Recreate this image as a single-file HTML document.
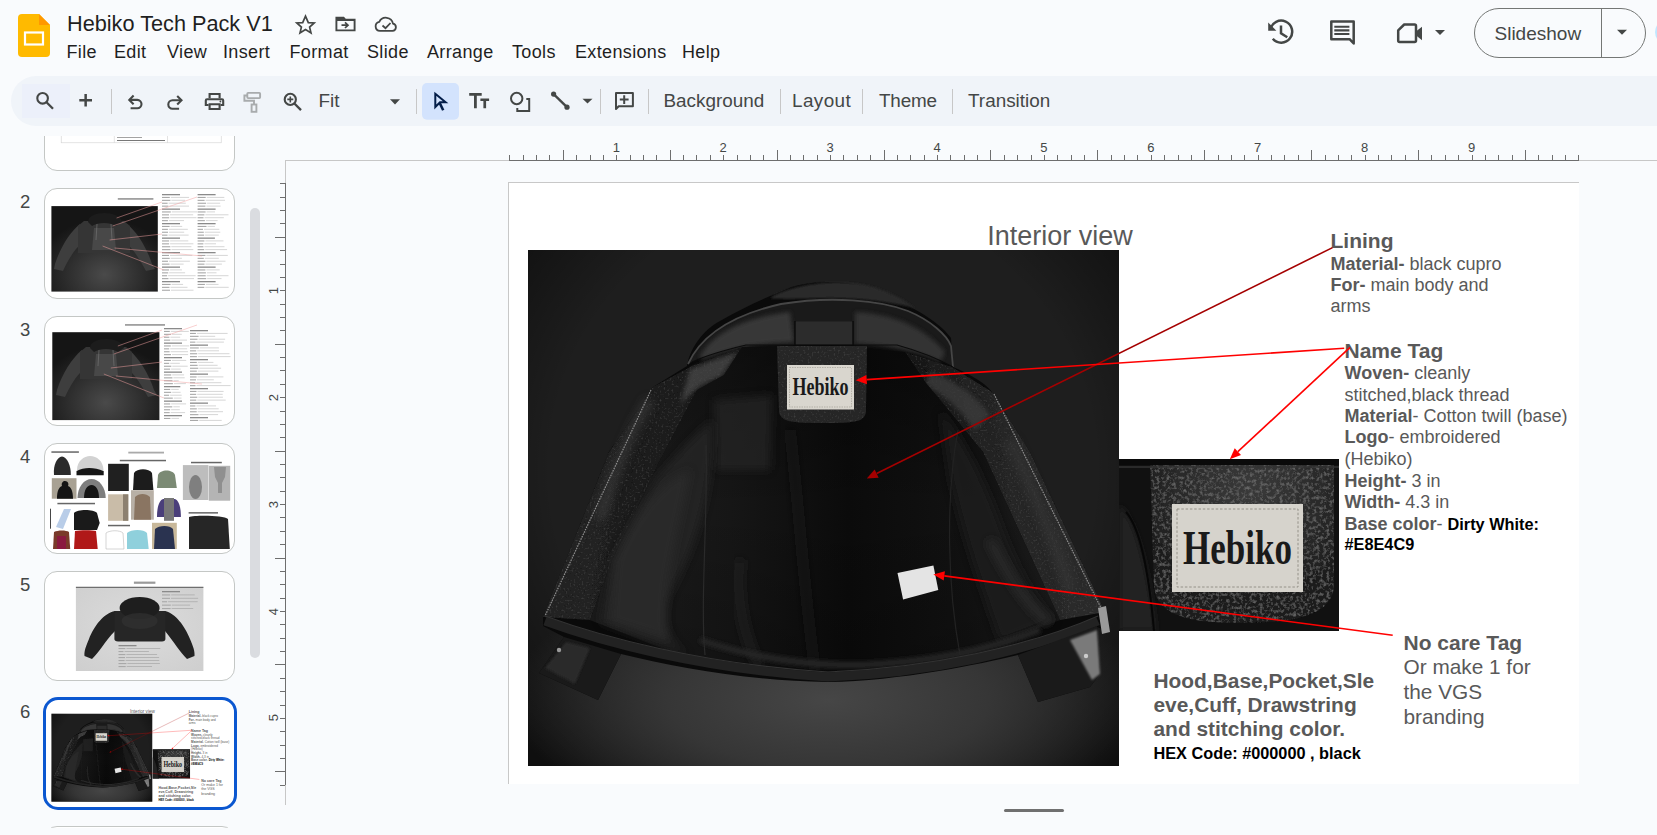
<!DOCTYPE html>
<html><head><meta charset="utf-8">
<style>
*{margin:0;padding:0;box-sizing:border-box}
html,body{width:1657px;height:835px;overflow:hidden;background:#F9FBFD;font-family:"Liberation Sans",sans-serif}
.a{position:absolute}
.t{position:absolute;white-space:nowrap;line-height:1}
.ic{position:absolute;fill:#444746}
.menu{position:absolute;top:42px;font-size:18px;letter-spacing:0.35px;color:#1F1F1F;white-space:nowrap;line-height:20px}
.tb{position:absolute;top:91px;font-size:18.9px;color:#444746;white-space:nowrap;line-height:20px}
.div{position:absolute;top:89px;width:1px;height:25px;background:#C7C7C7}
.sl{position:absolute;color:#595959;white-space:nowrap}
.thumb{position:absolute;left:44px;width:191px;height:110.4px;border:1px solid #C4C7C5;border-radius:13px;background:#fff;overflow:hidden}
.num{position:absolute;left:20px;font-size:18.5px;color:#444746;line-height:1}
</style></head><body>
<div class="a" style="left:0;top:0;width:1657px;height:835px;overflow:hidden">

<!-- ===== HEADER ===== -->
<!-- slides logo -->
<svg class="a" style="left:18px;top:14px" width="32" height="43" viewBox="0 0 32 43">
  <path d="M4 0H21L32 11V39a4 4 0 0 1-4 4H4a4 4 0 0 1-4-4V4a4 4 0 0 1 4-4z" fill="#FFBA00"/>
  <path d="M21 0L32 11H21z" fill="#FF9800"/>
  <rect x="7" y="18.5" width="18" height="12" fill="none" stroke="#fff" stroke-width="2.2"/>
</svg>
<div class="t" style="left:67px;top:12px;font-size:21.7px;color:#1F1F1F;line-height:24px">Hebiko Tech Pack V1</div>

<div class="menu" style="left:66.5px">File</div>
<div class="menu" style="left:114px">Edit</div>
<div class="menu" style="left:167px">View</div>
<div class="menu" style="left:223px">Insert</div>
<div class="menu" style="left:289.5px">Format</div>
<div class="menu" style="left:367px">Slide</div>
<div class="menu" style="left:427px">Arrange</div>
<div class="menu" style="left:512px">Tools</div>
<div class="menu" style="left:575px">Extensions</div>
<div class="menu" style="left:682px">Help</div>

<!-- ===== TOOLBAR ===== -->
<div class="a" style="left:11px;top:76px;width:1680px;height:50px;border-radius:25px;background:#F0F4F9"></div>
<div class="a" style="left:22px;top:84px;width:48px;height:34px;background:#ECF0FA"></div>


<!-- header icons overlay -->
<svg class="a" style="left:0;top:0" width="1657" height="130" viewBox="0 0 1657 130">
 <g fill="none" stroke="#444746" stroke-width="1.8" stroke-linejoin="miter">
  <!-- star -->
  <path d="M305.5 16.2 L308.3 22.6 L314.2 22.9 L309.6 27.1 L311 33 L305.5 29.6 L300 33 L301.4 27.1 L296.8 22.9 L302.7 22.6 Z" stroke-width="1.7"/>
  <!-- folder -->
  <path d="M336.4 17.6 H343.5 L345.5 19.8 H354.6 V30.4 H336.4 Z" stroke-width="1.9"/>
 </g>
 <path d="M336 17.2 H343.6 L345.6 19.5 H355 V21 H336 Z" fill="#444746"/>
 <path d="M341.5 25.2 H347.5 M345 22.4 L348 25.2 L345 28" fill="none" stroke="#444746" stroke-width="1.7"/>
 <!-- cloud -->
 <path d="M380 30.9 H392.5 A3.7 3.7 0 0 0 393 23.6 A7.3 7.3 0 0 0 379.3 21.8 A4.6 4.6 0 0 0 380 30.9 Z" fill="none" stroke="#444746" stroke-width="1.8"/>
 <path d="M382.5 25.5 L385.5 28.2 L390.5 23" fill="none" stroke="#444746" stroke-width="1.8"/>

 <!-- history -->
 <g fill="none" stroke="#444746" stroke-width="2.5">
  <path d="M1270.4 29.5 A11 11 0 1 1 1272.8 38.8"/>
  <path d="M1281 25.5 V33.2 L1287.3 37.2"/>
 </g>
 <path d="M1268.2 22.5 V30.8 H1276.4 Z" fill="#444746"/>
 <!-- comment -->
 <path d="M1331.3 21.6 H1353.7 V43.5 L1349.6 39.2 H1331.3 Z" fill="none" stroke="#444746" stroke-width="2.5" stroke-linejoin="round"/>
 <path d="M1334.3 26.7 H1349.4 M1334.3 30.4 H1349.4 M1334.3 34 H1349.4" stroke="#444746" stroke-width="2.1"/>
 <!-- meet camera -->
 <path d="M1404.2 24.5 H1414.6 Q1416 24.5 1416 26 V40.5 Q1416 42 1414.6 42 H1399.6 Q1398.2 42 1398.2 40.5 V30.3 Z" fill="none" stroke="#444746" stroke-width="2.5" stroke-linejoin="round"/>
 <path d="M1416.5 31 L1422 26.7 V40.2 L1416.5 35.8 Z" fill="#444746"/>
 <path d="M1435 30 H1445 L1440 35 Z" fill="#444746"/>
 <!-- slideshow arrow -->
 <path d="M1617 29.8 H1627 L1622 34.8 Z" fill="#444746"/>

 <!-- toolbar -->
 <g fill="none" stroke="#444746" stroke-width="2.1">
  <circle cx="42.6" cy="98.3" r="5.3"/>
  <path d="M46.5 102.2 L53 108.7" stroke-width="2.3"/>
  <path d="M79.3 100.2 H92 M85.65 94 V106.5" stroke-width="2.5"/>
  <!-- undo -->
  <path d="M129.5 99.9 H137.3 A4.2 4.2 0 0 1 137.3 108.3 H130.6"/>
  <path d="M133.6 95.6 L129.3 99.9 L133.6 104.2"/>
  <!-- redo -->
  <path d="M180.6 100.3 H172.5 A4.2 4.2 0 0 0 172.5 108.7 H179.1"/>
  <path d="M177.2 96 L181.5 100.3 L177.2 104.6"/>
  <!-- print -->
  <path d="M209.6 98.3 V94 H219.6 V98.3"/>
  <path d="M208.6 105 H205.8 V100.5 Q205.8 99.3 207 99.3 H222 Q223.2 99.3 223.2 100.5 V105 H220.6"/>
  <path d="M209.6 104.3 H219.6 V109 H209.6 Z"/>
 </g>
 <circle cx="220.4" cy="101.5" r="0.9" fill="#444746"/>
 <!-- paint format disabled -->
 <g fill="none" stroke="#A8ABAD" stroke-width="1.9">
  <rect x="247.3" y="92.9" width="12.8" height="5.2" rx="0.8"/>
  <path d="M247.3 95.5 H244.4 V100.8 H254 V104.5"/>
  <rect x="251.6" y="104.5" width="4.8" height="7.3"/>
 </g>
 <!-- zoom -->
 <g fill="none" stroke="#444746" stroke-width="2.1">
  <circle cx="290.3" cy="99.4" r="5.6"/>
  <path d="M294.4 103.5 L301 110.1" stroke-width="2.3"/>
  <path d="M287.3 99.4 H293.3 M290.3 96.4 V102.4" stroke-width="1.6"/>
 </g>
 <path d="M390 99.2 H400 L395 104.5 Z" fill="#444746"/>
 <!-- select -->
 <rect x="422" y="83" width="37" height="36.7" rx="5" fill="#D3E3FD"/>
 <path d="M435.3 93.8 L445.6 102.3 H440 L435.3 107 Z" fill="none" stroke="#041E49" stroke-width="2" stroke-linejoin="miter"/>
 <path d="M439.6 102.8 L443.2 110.3" stroke="#041E49" stroke-width="2.6"/>
 <!-- Tt -->
 <path d="M469.2 93.1 H481.7 V95.8 H476.8 V108.3 H474 V95.8 H469.2 Z" fill="#444746"/>
 <path d="M480.4 98.5 H489.1 V101.1 H486.1 V108.3 H483.4 V101.1 H480.4 Z" fill="#444746"/>
 <!-- shapes -->
 <g fill="none" stroke="#444746" stroke-width="2">
  <circle cx="516.7" cy="98.5" r="5.7"/>
  <path d="M517.3 108 V111 H529.2 V99.1 H526.3"/>
  <path d="M553.6 94.1 L567 107.2" stroke-width="2.4"/>
 </g>
 <circle cx="553.6" cy="94.1" r="2.6" fill="#444746"/>
 <circle cx="567" cy="107.2" r="2.6" fill="#444746"/>
 <path d="M582.5 98.8 H592.5 L587.5 103.6 Z" fill="#444746"/>
 <!-- add comment -->
 <path d="M616 92.9 H632.9 V106.2 H618.7 L616 109 Z" fill="none" stroke="#444746" stroke-width="2" stroke-linejoin="round"/>
 <path d="M619.8 99.6 H628.6 M624.2 95.2 V104" stroke="#444746" stroke-width="2"/>
</svg>
<div class="div" style="left:111px"></div>
<div class="div" style="left:416px"></div>
<div class="div" style="left:600px"></div>
<div class="div" style="left:648px"></div>
<div class="div" style="left:780px"></div>
<div class="div" style="left:862px"></div>
<div class="div" style="left:952px"></div>
<div class="tb" style="left:318.5px">Fit</div>
<div class="tb" style="left:663.5px">Background</div>
<div class="tb" style="left:792px;letter-spacing:0.4px">Layout</div>
<div class="tb" style="left:879px;letter-spacing:-0.2px">Theme</div>
<div class="tb" style="left:968px">Transition</div>

<!-- slideshow button -->
<div class="a" style="left:1474px;top:8px;width:172px;height:50px;border:1px solid #747775;border-radius:25px"></div>
<div class="a" style="left:1601px;top:8px;width:1px;height:50px;background:#747775"></div>
<div class="t" style="left:1494.5px;top:24px;font-size:19px;color:#444746;line-height:20px">Slideshow</div>
<div class="a" style="left:1655px;top:20px;width:40px;height:24px;border-radius:12px;background:#C2E7FF"></div>


<!-- RULERS -->
<svg class="a" style="left:0;top:130px" width="1657" height="705" viewBox="0 130 1657 705" shape-rendering="crispEdges">
<rect x="285" y="160" width="1372" height="1" fill="#C7C7C7"/>
<rect x="509" y="160" width="1070" height="1.3" fill="#6E6E6E"/>
<rect x="285" y="160" width="1" height="645" fill="#C7C7C7"/>
<rect x="285" y="183" width="1.3" height="602" fill="#6E6E6E"/>
<rect x="509" y="155" width="1.3" height="5" fill="#6E6E6E"/>
<rect x="523" y="155" width="1.3" height="5" fill="#6E6E6E"/>
<rect x="536" y="155" width="1.3" height="5" fill="#6E6E6E"/>
<rect x="549" y="155" width="1.3" height="5" fill="#6E6E6E"/>
<rect x="563" y="150" width="1.3" height="10" fill="#6E6E6E"/>
<rect x="576" y="155" width="1.3" height="5" fill="#6E6E6E"/>
<rect x="590" y="155" width="1.3" height="5" fill="#6E6E6E"/>
<rect x="603" y="155" width="1.3" height="5" fill="#6E6E6E"/>
<rect x="616" y="155" width="1.3" height="5" fill="#6E6E6E"/>
<rect x="630" y="155" width="1.3" height="5" fill="#6E6E6E"/>
<rect x="643" y="155" width="1.3" height="5" fill="#6E6E6E"/>
<rect x="656" y="155" width="1.3" height="5" fill="#6E6E6E"/>
<rect x="670" y="150" width="1.3" height="10" fill="#6E6E6E"/>
<rect x="683" y="155" width="1.3" height="5" fill="#6E6E6E"/>
<rect x="696" y="155" width="1.3" height="5" fill="#6E6E6E"/>
<rect x="710" y="155" width="1.3" height="5" fill="#6E6E6E"/>
<rect x="723" y="155" width="1.3" height="5" fill="#6E6E6E"/>
<rect x="737" y="155" width="1.3" height="5" fill="#6E6E6E"/>
<rect x="750" y="155" width="1.3" height="5" fill="#6E6E6E"/>
<rect x="763" y="155" width="1.3" height="5" fill="#6E6E6E"/>
<rect x="777" y="150" width="1.3" height="10" fill="#6E6E6E"/>
<rect x="790" y="155" width="1.3" height="5" fill="#6E6E6E"/>
<rect x="803" y="155" width="1.3" height="5" fill="#6E6E6E"/>
<rect x="817" y="155" width="1.3" height="5" fill="#6E6E6E"/>
<rect x="830" y="155" width="1.3" height="5" fill="#6E6E6E"/>
<rect x="843" y="155" width="1.3" height="5" fill="#6E6E6E"/>
<rect x="857" y="155" width="1.3" height="5" fill="#6E6E6E"/>
<rect x="870" y="155" width="1.3" height="5" fill="#6E6E6E"/>
<rect x="884" y="150" width="1.3" height="10" fill="#6E6E6E"/>
<rect x="897" y="155" width="1.3" height="5" fill="#6E6E6E"/>
<rect x="910" y="155" width="1.3" height="5" fill="#6E6E6E"/>
<rect x="924" y="155" width="1.3" height="5" fill="#6E6E6E"/>
<rect x="937" y="155" width="1.3" height="5" fill="#6E6E6E"/>
<rect x="950" y="155" width="1.3" height="5" fill="#6E6E6E"/>
<rect x="964" y="155" width="1.3" height="5" fill="#6E6E6E"/>
<rect x="977" y="155" width="1.3" height="5" fill="#6E6E6E"/>
<rect x="990" y="150" width="1.3" height="10" fill="#6E6E6E"/>
<rect x="1004" y="155" width="1.3" height="5" fill="#6E6E6E"/>
<rect x="1017" y="155" width="1.3" height="5" fill="#6E6E6E"/>
<rect x="1031" y="155" width="1.3" height="5" fill="#6E6E6E"/>
<rect x="1044" y="155" width="1.3" height="5" fill="#6E6E6E"/>
<rect x="1057" y="155" width="1.3" height="5" fill="#6E6E6E"/>
<rect x="1071" y="155" width="1.3" height="5" fill="#6E6E6E"/>
<rect x="1084" y="155" width="1.3" height="5" fill="#6E6E6E"/>
<rect x="1097" y="150" width="1.3" height="10" fill="#6E6E6E"/>
<rect x="1111" y="155" width="1.3" height="5" fill="#6E6E6E"/>
<rect x="1124" y="155" width="1.3" height="5" fill="#6E6E6E"/>
<rect x="1137" y="155" width="1.3" height="5" fill="#6E6E6E"/>
<rect x="1151" y="155" width="1.3" height="5" fill="#6E6E6E"/>
<rect x="1164" y="155" width="1.3" height="5" fill="#6E6E6E"/>
<rect x="1178" y="155" width="1.3" height="5" fill="#6E6E6E"/>
<rect x="1191" y="155" width="1.3" height="5" fill="#6E6E6E"/>
<rect x="1204" y="150" width="1.3" height="10" fill="#6E6E6E"/>
<rect x="1218" y="155" width="1.3" height="5" fill="#6E6E6E"/>
<rect x="1231" y="155" width="1.3" height="5" fill="#6E6E6E"/>
<rect x="1244" y="155" width="1.3" height="5" fill="#6E6E6E"/>
<rect x="1258" y="155" width="1.3" height="5" fill="#6E6E6E"/>
<rect x="1271" y="155" width="1.3" height="5" fill="#6E6E6E"/>
<rect x="1284" y="155" width="1.3" height="5" fill="#6E6E6E"/>
<rect x="1298" y="155" width="1.3" height="5" fill="#6E6E6E"/>
<rect x="1311" y="150" width="1.3" height="10" fill="#6E6E6E"/>
<rect x="1325" y="155" width="1.3" height="5" fill="#6E6E6E"/>
<rect x="1338" y="155" width="1.3" height="5" fill="#6E6E6E"/>
<rect x="1351" y="155" width="1.3" height="5" fill="#6E6E6E"/>
<rect x="1365" y="155" width="1.3" height="5" fill="#6E6E6E"/>
<rect x="1378" y="155" width="1.3" height="5" fill="#6E6E6E"/>
<rect x="1391" y="155" width="1.3" height="5" fill="#6E6E6E"/>
<rect x="1405" y="155" width="1.3" height="5" fill="#6E6E6E"/>
<rect x="1418" y="150" width="1.3" height="10" fill="#6E6E6E"/>
<rect x="1431" y="155" width="1.3" height="5" fill="#6E6E6E"/>
<rect x="1445" y="155" width="1.3" height="5" fill="#6E6E6E"/>
<rect x="1458" y="155" width="1.3" height="5" fill="#6E6E6E"/>
<rect x="1472" y="155" width="1.3" height="5" fill="#6E6E6E"/>
<rect x="1485" y="155" width="1.3" height="5" fill="#6E6E6E"/>
<rect x="1498" y="155" width="1.3" height="5" fill="#6E6E6E"/>
<rect x="1512" y="155" width="1.3" height="5" fill="#6E6E6E"/>
<rect x="1525" y="150" width="1.3" height="10" fill="#6E6E6E"/>
<rect x="1538" y="155" width="1.3" height="5" fill="#6E6E6E"/>
<rect x="1552" y="155" width="1.3" height="5" fill="#6E6E6E"/>
<rect x="1565" y="155" width="1.3" height="5" fill="#6E6E6E"/>
<rect x="1578" y="155" width="1.3" height="5" fill="#6E6E6E"/>
<rect x="280" y="183" width="5" height="1.3" fill="#6E6E6E"/>
<rect x="280" y="197" width="5" height="1.3" fill="#6E6E6E"/>
<rect x="280" y="210" width="5" height="1.3" fill="#6E6E6E"/>
<rect x="280" y="223" width="5" height="1.3" fill="#6E6E6E"/>
<rect x="275" y="237" width="10" height="1.3" fill="#6E6E6E"/>
<rect x="280" y="250" width="5" height="1.3" fill="#6E6E6E"/>
<rect x="280" y="264" width="5" height="1.3" fill="#6E6E6E"/>
<rect x="280" y="277" width="5" height="1.3" fill="#6E6E6E"/>
<rect x="280" y="290" width="5" height="1.3" fill="#6E6E6E"/>
<rect x="280" y="304" width="5" height="1.3" fill="#6E6E6E"/>
<rect x="280" y="317" width="5" height="1.3" fill="#6E6E6E"/>
<rect x="280" y="330" width="5" height="1.3" fill="#6E6E6E"/>
<rect x="275" y="344" width="10" height="1.3" fill="#6E6E6E"/>
<rect x="280" y="357" width="5" height="1.3" fill="#6E6E6E"/>
<rect x="280" y="370" width="5" height="1.3" fill="#6E6E6E"/>
<rect x="280" y="384" width="5" height="1.3" fill="#6E6E6E"/>
<rect x="280" y="397" width="5" height="1.3" fill="#6E6E6E"/>
<rect x="280" y="411" width="5" height="1.3" fill="#6E6E6E"/>
<rect x="280" y="424" width="5" height="1.3" fill="#6E6E6E"/>
<rect x="280" y="437" width="5" height="1.3" fill="#6E6E6E"/>
<rect x="275" y="451" width="10" height="1.3" fill="#6E6E6E"/>
<rect x="280" y="464" width="5" height="1.3" fill="#6E6E6E"/>
<rect x="280" y="477" width="5" height="1.3" fill="#6E6E6E"/>
<rect x="280" y="491" width="5" height="1.3" fill="#6E6E6E"/>
<rect x="280" y="504" width="5" height="1.3" fill="#6E6E6E"/>
<rect x="280" y="517" width="5" height="1.3" fill="#6E6E6E"/>
<rect x="280" y="531" width="5" height="1.3" fill="#6E6E6E"/>
<rect x="280" y="544" width="5" height="1.3" fill="#6E6E6E"/>
<rect x="275" y="558" width="10" height="1.3" fill="#6E6E6E"/>
<rect x="280" y="571" width="5" height="1.3" fill="#6E6E6E"/>
<rect x="280" y="584" width="5" height="1.3" fill="#6E6E6E"/>
<rect x="280" y="598" width="5" height="1.3" fill="#6E6E6E"/>
<rect x="280" y="611" width="5" height="1.3" fill="#6E6E6E"/>
<rect x="280" y="624" width="5" height="1.3" fill="#6E6E6E"/>
<rect x="280" y="638" width="5" height="1.3" fill="#6E6E6E"/>
<rect x="280" y="651" width="5" height="1.3" fill="#6E6E6E"/>
<rect x="275" y="664" width="10" height="1.3" fill="#6E6E6E"/>
<rect x="280" y="678" width="5" height="1.3" fill="#6E6E6E"/>
<rect x="280" y="691" width="5" height="1.3" fill="#6E6E6E"/>
<rect x="280" y="705" width="5" height="1.3" fill="#6E6E6E"/>
<rect x="280" y="718" width="5" height="1.3" fill="#6E6E6E"/>
<rect x="280" y="731" width="5" height="1.3" fill="#6E6E6E"/>
<rect x="280" y="745" width="5" height="1.3" fill="#6E6E6E"/>
<rect x="280" y="758" width="5" height="1.3" fill="#6E6E6E"/>
<rect x="275" y="771" width="10" height="1.3" fill="#6E6E6E"/>
<rect x="280" y="785" width="5" height="1.3" fill="#6E6E6E"/>
</svg>
<div class="t" style="left:606.3px;top:141px;width:20px;text-align:center;font-size:13px;color:#444746">1</div>
<div class="t" style="left:713.2px;top:141px;width:20px;text-align:center;font-size:13px;color:#444746">2</div>
<div class="t" style="left:820.1px;top:141px;width:20px;text-align:center;font-size:13px;color:#444746">3</div>
<div class="t" style="left:927.0px;top:141px;width:20px;text-align:center;font-size:13px;color:#444746">4</div>
<div class="t" style="left:1033.9px;top:141px;width:20px;text-align:center;font-size:13px;color:#444746">5</div>
<div class="t" style="left:1140.8px;top:141px;width:20px;text-align:center;font-size:13px;color:#444746">6</div>
<div class="t" style="left:1247.7px;top:141px;width:20px;text-align:center;font-size:13px;color:#444746">7</div>
<div class="t" style="left:1354.6px;top:141px;width:20px;text-align:center;font-size:13px;color:#444746">8</div>
<div class="t" style="left:1461.5px;top:141px;width:20px;text-align:center;font-size:13px;color:#444746">9</div>
<div class="t" style="left:263px;top:283.8px;width:20px;height:13px;text-align:center;font-size:13px;color:#444746;transform:rotate(-90deg)">1</div>
<div class="t" style="left:263px;top:390.7px;width:20px;height:13px;text-align:center;font-size:13px;color:#444746;transform:rotate(-90deg)">2</div>
<div class="t" style="left:263px;top:497.6px;width:20px;height:13px;text-align:center;font-size:13px;color:#444746;transform:rotate(-90deg)">3</div>
<div class="t" style="left:263px;top:604.5px;width:20px;height:13px;text-align:center;font-size:13px;color:#444746;transform:rotate(-90deg)">4</div>
<div class="t" style="left:263px;top:711.4px;width:20px;height:13px;text-align:center;font-size:13px;color:#444746;transform:rotate(-90deg)">5</div>
<div class="a" style="left:250px;top:208px;width:10px;height:450px;border-radius:5px;background:#DADCE0"></div>
<div class="a" style="left:1004px;top:809px;width:60px;height:3px;border-radius:2px;background:#707070"></div>
<!-- ===== FILM ===== -->
<div class="a" style="left:0;top:136px;width:248px;height:692px;overflow:hidden">
<div class="a" style="left:0;top:-136px;width:248px;height:835px">
<div class="thumb" style="top:60.8px"></div>
<div class="thumb" style="top:188.3px"></div>
<div class="num" style="top:193.4px">2</div>
<div class="thumb" style="top:315.8px"></div>
<div class="num" style="top:320.9px">3</div>
<div class="thumb" style="top:443.3px"></div>
<div class="num" style="top:448.4px">4</div>
<div class="thumb" style="top:570.8px"></div>
<div class="num" style="top:575.9px">5</div>
<div class="a" style="left:42.6px;top:696.8px;width:194.7px;height:113.6px;border:3px solid #0B57D0;border-radius:15px;background:#fff"></div>
<div class="num" style="top:703.4px">6</div>
<div class="thumb" style="top:825.8px"></div>
<svg class="a" style="left:44px;top:60.8px" width="191" height="111" viewBox="0 0 191 111"><rect x="17.2" y="60" width="160" height="21.8" fill="none" stroke="#d0d0d0" stroke-width="0.6"/><path d="M70.3 60 V81.8 M123.5 60 V81.8" stroke="#d0d0d0" stroke-width="0.6"/><rect x="73" y="76" width="25" height="0.9" fill="#999"/><rect x="73" y="79" width="48" height="1" fill="#777"/></svg>
<svg class="a" style="left:44px;top:188.3px" width="191" height="111" viewBox="0 0 191 111"><defs><radialGradient id="tg20" cx="0.5" cy="0.8" r="0.65"><stop offset="0" stop-color="#4a4a4a"/><stop offset="0.6" stop-color="#2a2a2a"/><stop offset="1" stop-color="#151515"/></radialGradient></defs><rect x="7.4" y="18.1" width="106.39999999999999" height="85.5" fill="url(#tg20)"/><path d="M36.0 36.0 C26.0 44.0 16.0 60.0 11.0 76.0 L10.0 81.0 L19.0 83.0 C24.0 72.0 30.0 62.0 37.0 56.0 Z" fill="#3e3e3e"/><path d="M83.0 36.0 C93.0 44.0 103.0 60.0 108.0 76.0 L111.0 81.0 L102.0 83.0 C96.0 72.0 90.0 62.0 83.0 56.0 Z" fill="#3e3e3e"/><path d="M40.0 33.0 L80.0 33.0 L86.0 38.0 L86.0 65.0 L34.0 65.0 L34.0 38.0 Z" fill="#353535"/><path d="M50.0 40.0 L70.0 40.0 L72.0 62.0 L48.0 62.0 Z" fill="#484848"/><path d="M44.0 34.0 C44.0 22.0 76.0 22.0 78.0 34.0 L72.0 38.0 C66.0 34.0 54.0 34.0 48.0 38.0 Z" fill="#1c1c1c"/><path d="M53.0 36.0 L52.0 52.0 M67.0 36.0 L68.0 52.0" stroke="#777" stroke-width="0.6"/><rect x="73.8" y="10" width="35.6" height="1.8" fill="#a0a0a0"/><rect x="118.0" y="6.0" width="18.0" height="1.3" fill="#8a8a8a"/><rect x="118.0" y="8.9" width="7.8" height="1.1" fill="#a8a8a8"/><rect x="126.8" y="8.9" width="18.3" height="1" fill="#d6d6d6"/><rect x="118.0" y="11.8" width="8.4" height="1.1" fill="#a8a8a8"/><rect x="127.4" y="11.8" width="13.7" height="1" fill="#d6d6d6"/><rect x="118.0" y="14.7" width="5.6" height="1.1" fill="#a8a8a8"/><rect x="124.6" y="14.7" width="17.2" height="1" fill="#d6d6d6"/><rect x="118.0" y="17.6" width="6.4" height="1.1" fill="#a8a8a8"/><rect x="125.4" y="17.6" width="19.6" height="1" fill="#d6d6d6"/><rect x="118.0" y="20.5" width="18.0" height="1.3" fill="#8a8a8a"/><rect x="118.0" y="23.4" width="8.8" height="1.1" fill="#a8a8a8"/><rect x="127.8" y="23.4" width="25.2" height="1" fill="#d6d6d6"/><rect x="118.0" y="26.3" width="7.0" height="1.1" fill="#a8a8a8"/><rect x="126.0" y="26.3" width="23.2" height="1" fill="#d6d6d6"/><rect x="118.0" y="29.2" width="7.2" height="1.1" fill="#a8a8a8"/><rect x="126.2" y="29.2" width="26.3" height="1" fill="#d6d6d6"/><rect x="118.0" y="32.1" width="5.9" height="1.1" fill="#a8a8a8"/><rect x="124.9" y="32.1" width="15.1" height="1" fill="#d6d6d6"/><rect x="118.0" y="35.0" width="18.0" height="1.3" fill="#8a8a8a"/><rect x="118.0" y="37.9" width="7.6" height="1.1" fill="#a8a8a8"/><rect x="126.6" y="37.9" width="11.6" height="1" fill="#d6d6d6"/><rect x="118.0" y="40.8" width="5.9" height="1.1" fill="#a8a8a8"/><rect x="124.9" y="40.8" width="18.9" height="1" fill="#d6d6d6"/><rect x="118.0" y="43.7" width="6.0" height="1.1" fill="#a8a8a8"/><rect x="125.0" y="43.7" width="15.2" height="1" fill="#d6d6d6"/><rect x="118.0" y="46.6" width="5.5" height="1.1" fill="#a8a8a8"/><rect x="124.5" y="46.6" width="20.1" height="1" fill="#d6d6d6"/><rect x="118.0" y="49.5" width="18.0" height="1.3" fill="#8a8a8a"/><rect x="118.0" y="52.4" width="7.1" height="1.1" fill="#a8a8a8"/><rect x="126.1" y="52.4" width="18.2" height="1" fill="#d6d6d6"/><rect x="118.0" y="55.3" width="7.1" height="1.1" fill="#a8a8a8"/><rect x="126.1" y="55.3" width="23.3" height="1" fill="#d6d6d6"/><rect x="118.0" y="58.2" width="8.3" height="1.1" fill="#a8a8a8"/><rect x="127.3" y="58.2" width="20.1" height="1" fill="#d6d6d6"/><rect x="118.0" y="61.1" width="8.5" height="1.1" fill="#a8a8a8"/><rect x="127.5" y="61.1" width="21.8" height="1" fill="#d6d6d6"/><rect x="118.0" y="64.0" width="18.0" height="1.3" fill="#8a8a8a"/><rect x="118.0" y="66.9" width="7.0" height="1.1" fill="#a8a8a8"/><rect x="126.0" y="66.9" width="22.3" height="1" fill="#d6d6d6"/><rect x="118.0" y="69.8" width="7.7" height="1.1" fill="#a8a8a8"/><rect x="126.7" y="69.8" width="11.2" height="1" fill="#d6d6d6"/><rect x="118.0" y="72.7" width="6.0" height="1.1" fill="#a8a8a8"/><rect x="125.0" y="72.7" width="20.9" height="1" fill="#d6d6d6"/><rect x="118.0" y="75.6" width="7.5" height="1.1" fill="#a8a8a8"/><rect x="126.5" y="75.6" width="13.1" height="1" fill="#d6d6d6"/><rect x="118.0" y="78.5" width="18.0" height="1.3" fill="#8a8a8a"/><rect x="118.0" y="81.4" width="7.1" height="1.1" fill="#a8a8a8"/><rect x="126.1" y="81.4" width="11.8" height="1" fill="#d6d6d6"/><rect x="118.0" y="84.3" width="6.2" height="1.1" fill="#a8a8a8"/><rect x="125.2" y="84.3" width="15.9" height="1" fill="#d6d6d6"/><rect x="118.0" y="87.2" width="5.1" height="1.1" fill="#a8a8a8"/><rect x="124.1" y="87.2" width="27.5" height="1" fill="#d6d6d6"/><rect x="118.0" y="90.1" width="6.5" height="1.1" fill="#a8a8a8"/><rect x="125.5" y="90.1" width="24.5" height="1" fill="#d6d6d6"/><rect x="118.0" y="93.0" width="18.0" height="1.3" fill="#8a8a8a"/><rect x="118.0" y="95.9" width="8.6" height="1.1" fill="#a8a8a8"/><rect x="127.6" y="95.9" width="11.5" height="1" fill="#d6d6d6"/><rect x="118.0" y="98.8" width="7.5" height="1.1" fill="#a8a8a8"/><rect x="126.5" y="98.8" width="17.0" height="1" fill="#d6d6d6"/><rect x="118.0" y="101.7" width="8.0" height="1.1" fill="#a8a8a8"/><rect x="127.0" y="101.7" width="22.5" height="1" fill="#d6d6d6"/><rect x="153.6" y="6.0" width="18.0" height="1.3" fill="#8a8a8a"/><rect x="153.6" y="8.9" width="8.1" height="1.1" fill="#a8a8a8"/><rect x="162.7" y="8.9" width="17.6" height="1" fill="#d6d6d6"/><rect x="153.6" y="11.8" width="7.0" height="1.1" fill="#a8a8a8"/><rect x="161.6" y="11.8" width="19.4" height="1" fill="#d6d6d6"/><rect x="153.6" y="14.7" width="8.5" height="1.1" fill="#a8a8a8"/><rect x="163.1" y="14.7" width="13.0" height="1" fill="#d6d6d6"/><rect x="153.6" y="17.6" width="7.8" height="1.1" fill="#a8a8a8"/><rect x="162.4" y="17.6" width="14.2" height="1" fill="#d6d6d6"/><rect x="153.6" y="20.5" width="18.0" height="1.3" fill="#8a8a8a"/><rect x="153.6" y="23.4" width="8.0" height="1.1" fill="#a8a8a8"/><rect x="162.6" y="23.4" width="8.4" height="1" fill="#d6d6d6"/><rect x="153.6" y="26.3" width="6.8" height="1.1" fill="#a8a8a8"/><rect x="161.4" y="26.3" width="23.1" height="1" fill="#d6d6d6"/><rect x="153.6" y="29.2" width="5.9" height="1.1" fill="#a8a8a8"/><rect x="160.5" y="29.2" width="19.3" height="1" fill="#d6d6d6"/><rect x="153.6" y="32.1" width="7.3" height="1.1" fill="#a8a8a8"/><rect x="161.9" y="32.1" width="11.7" height="1" fill="#d6d6d6"/><rect x="153.6" y="35.0" width="18.0" height="1.3" fill="#8a8a8a"/><rect x="153.6" y="37.9" width="8.9" height="1.1" fill="#a8a8a8"/><rect x="163.5" y="37.9" width="7.4" height="1" fill="#d6d6d6"/><rect x="153.6" y="40.8" width="5.4" height="1.1" fill="#a8a8a8"/><rect x="160.0" y="40.8" width="15.3" height="1" fill="#d6d6d6"/><rect x="153.6" y="43.7" width="6.2" height="1.1" fill="#a8a8a8"/><rect x="160.8" y="43.7" width="15.5" height="1" fill="#d6d6d6"/><rect x="153.6" y="46.6" width="6.5" height="1.1" fill="#a8a8a8"/><rect x="161.1" y="46.6" width="13.7" height="1" fill="#d6d6d6"/><rect x="153.6" y="49.5" width="17.3" height="1.3" fill="#8a8a8a"/><rect x="153.6" y="52.4" width="6.8" height="1.1" fill="#a8a8a8"/><rect x="161.4" y="52.4" width="18.1" height="1" fill="#d6d6d6"/><rect x="153.6" y="55.3" width="5.8" height="1.1" fill="#a8a8a8"/><rect x="160.4" y="55.3" width="11.6" height="1" fill="#d6d6d6"/><rect x="153.6" y="58.2" width="5.8" height="1.1" fill="#a8a8a8"/><rect x="160.4" y="58.2" width="20.1" height="1" fill="#d6d6d6"/><rect x="153.6" y="61.1" width="6.6" height="1.1" fill="#a8a8a8"/><rect x="161.2" y="61.1" width="21.9" height="1" fill="#d6d6d6"/><rect x="153.6" y="64.0" width="18.0" height="1.3" fill="#8a8a8a"/><rect x="153.6" y="66.9" width="7.8" height="1.1" fill="#a8a8a8"/><rect x="162.4" y="66.9" width="21.4" height="1" fill="#d6d6d6"/><rect x="153.6" y="69.8" width="6.2" height="1.1" fill="#a8a8a8"/><rect x="160.8" y="69.8" width="14.0" height="1" fill="#d6d6d6"/><rect x="153.6" y="72.7" width="7.8" height="1.1" fill="#a8a8a8"/><rect x="162.4" y="72.7" width="19.1" height="1" fill="#d6d6d6"/><rect x="153.6" y="75.6" width="6.9" height="1.1" fill="#a8a8a8"/><rect x="161.5" y="75.6" width="16.4" height="1" fill="#d6d6d6"/><rect x="153.6" y="78.5" width="18.0" height="1.3" fill="#8a8a8a"/><rect x="153.6" y="81.4" width="7.8" height="1.1" fill="#a8a8a8"/><rect x="162.4" y="81.4" width="13.3" height="1" fill="#d6d6d6"/><rect x="153.6" y="84.3" width="8.3" height="1.1" fill="#a8a8a8"/><rect x="162.9" y="84.3" width="9.6" height="1" fill="#d6d6d6"/><rect x="153.6" y="87.2" width="8.1" height="1.1" fill="#a8a8a8"/><rect x="162.7" y="87.2" width="21.8" height="1" fill="#d6d6d6"/><rect x="153.6" y="90.1" width="8.6" height="1.1" fill="#a8a8a8"/><rect x="163.2" y="90.1" width="14.3" height="1" fill="#d6d6d6"/><rect x="153.6" y="93.0" width="18.0" height="1.3" fill="#8a8a8a"/><rect x="153.6" y="95.9" width="7.3" height="1.1" fill="#a8a8a8"/><rect x="161.9" y="95.9" width="12.6" height="1" fill="#d6d6d6"/><rect x="153.6" y="98.8" width="6.7" height="1.1" fill="#a8a8a8"/><rect x="161.3" y="98.8" width="23.4" height="1" fill="#d6d6d6"/><path d="M118 14 L72.6 30 M153 9 L68.6 38 M118 46 L65.6 52 M158 68 L70.6 60 M120 82 L58.6 58" stroke="#f3a0a0" stroke-width="0.5" fill="none"/></svg>
<svg class="a" style="left:44px;top:315.8px" width="191" height="111" viewBox="0 0 191 111"><defs><radialGradient id="tg30" cx="0.5" cy="0.8" r="0.65"><stop offset="0" stop-color="#4a4a4a"/><stop offset="0.6" stop-color="#2a2a2a"/><stop offset="1" stop-color="#151515"/></radialGradient></defs><rect x="8.3" y="16.2" width="107.10000000000001" height="87.89999999999999" fill="url(#tg30)"/><path d="M38.0 34.0 C28.0 42.0 18.0 58.0 13.0 74.0 L12.0 79.0 L21.0 81.0 C26.0 70.0 32.0 60.0 39.0 54.0 Z" fill="#3e3e3e"/><path d="M85.0 34.0 C95.0 42.0 105.0 58.0 110.0 74.0 L113.0 79.0 L104.0 81.0 C98.0 70.0 92.0 60.0 85.0 54.0 Z" fill="#3e3e3e"/><path d="M42.0 31.0 L82.0 31.0 L88.0 36.0 L88.0 63.0 L36.0 63.0 L36.0 36.0 Z" fill="#353535"/><path d="M52.0 38.0 L72.0 38.0 L74.0 60.0 L50.0 60.0 Z" fill="#484848"/><path d="M46.0 32.0 C46.0 20.0 78.0 20.0 80.0 32.0 L74.0 36.0 C68.0 32.0 56.0 32.0 50.0 36.0 Z" fill="#1c1c1c"/><path d="M55.0 34.0 L54.0 50.0 M69.0 34.0 L70.0 50.0" stroke="#777" stroke-width="0.6"/><rect x="81" y="8" width="40" height="1.8" fill="#a0a0a0"/><rect x="120.0" y="12.0" width="18.0" height="1.3" fill="#8a8a8a"/><rect x="120.0" y="14.9" width="5.8" height="1.1" fill="#a8a8a8"/><rect x="126.8" y="14.9" width="18.0" height="1" fill="#d6d6d6"/><rect x="120.0" y="17.8" width="6.9" height="1.1" fill="#a8a8a8"/><rect x="127.9" y="17.8" width="9.9" height="1" fill="#d6d6d6"/><rect x="120.0" y="20.7" width="5.4" height="1.1" fill="#a8a8a8"/><rect x="126.4" y="20.7" width="9.8" height="1" fill="#d6d6d6"/><rect x="120.0" y="23.6" width="6.3" height="1.1" fill="#a8a8a8"/><rect x="127.3" y="23.6" width="15.7" height="1" fill="#d6d6d6"/><rect x="120.0" y="26.5" width="18.0" height="1.3" fill="#8a8a8a"/><rect x="120.0" y="29.4" width="6.8" height="1.1" fill="#a8a8a8"/><rect x="127.8" y="29.4" width="17.4" height="1" fill="#d6d6d6"/><rect x="120.0" y="32.3" width="5.2" height="1.1" fill="#a8a8a8"/><rect x="126.2" y="32.3" width="16.9" height="1" fill="#d6d6d6"/><rect x="120.0" y="35.2" width="5.6" height="1.1" fill="#a8a8a8"/><rect x="126.6" y="35.2" width="17.4" height="1" fill="#d6d6d6"/><rect x="120.0" y="38.1" width="7.0" height="1.1" fill="#a8a8a8"/><rect x="128.0" y="38.1" width="16.1" height="1" fill="#d6d6d6"/><rect x="120.0" y="41.0" width="18.0" height="1.3" fill="#8a8a8a"/><rect x="120.0" y="43.9" width="6.9" height="1.1" fill="#a8a8a8"/><rect x="127.9" y="43.9" width="14.3" height="1" fill="#d6d6d6"/><rect x="120.0" y="46.8" width="5.2" height="1.1" fill="#a8a8a8"/><rect x="126.2" y="46.8" width="9.6" height="1" fill="#d6d6d6"/><rect x="120.0" y="49.7" width="7.3" height="1.1" fill="#a8a8a8"/><rect x="128.3" y="49.7" width="15.4" height="1" fill="#d6d6d6"/><rect x="120.0" y="52.6" width="6.1" height="1.1" fill="#a8a8a8"/><rect x="127.1" y="52.6" width="9.6" height="1" fill="#d6d6d6"/><rect x="120.0" y="55.5" width="18.0" height="1.3" fill="#8a8a8a"/><rect x="120.0" y="58.4" width="7.2" height="1.1" fill="#a8a8a8"/><rect x="128.2" y="58.4" width="11.9" height="1" fill="#d6d6d6"/><rect x="120.0" y="61.3" width="8.4" height="1.1" fill="#a8a8a8"/><rect x="129.4" y="61.3" width="11.3" height="1" fill="#d6d6d6"/><rect x="120.0" y="64.2" width="8.5" height="1.1" fill="#a8a8a8"/><rect x="129.5" y="64.2" width="5.2" height="1" fill="#d6d6d6"/><rect x="120.0" y="67.1" width="8.9" height="1.1" fill="#a8a8a8"/><rect x="129.9" y="67.1" width="12.0" height="1" fill="#d6d6d6"/><rect x="120.0" y="70.0" width="16.3" height="1.3" fill="#8a8a8a"/><rect x="120.0" y="72.9" width="6.2" height="1.1" fill="#a8a8a8"/><rect x="127.2" y="72.9" width="7.5" height="1" fill="#d6d6d6"/><rect x="120.0" y="75.8" width="7.2" height="1.1" fill="#a8a8a8"/><rect x="128.2" y="75.8" width="8.4" height="1" fill="#d6d6d6"/><rect x="120.0" y="78.7" width="5.1" height="1.1" fill="#a8a8a8"/><rect x="126.1" y="78.7" width="11.6" height="1" fill="#d6d6d6"/><rect x="120.0" y="81.6" width="8.8" height="1.1" fill="#a8a8a8"/><rect x="129.8" y="81.6" width="7.7" height="1" fill="#d6d6d6"/><rect x="120.0" y="84.5" width="18.0" height="1.3" fill="#8a8a8a"/><rect x="120.0" y="87.4" width="6.2" height="1.1" fill="#a8a8a8"/><rect x="127.2" y="87.4" width="14.9" height="1" fill="#d6d6d6"/><rect x="120.0" y="90.3" width="8.3" height="1.1" fill="#a8a8a8"/><rect x="129.3" y="90.3" width="6.5" height="1" fill="#d6d6d6"/><rect x="120.0" y="93.2" width="6.1" height="1.1" fill="#a8a8a8"/><rect x="127.1" y="93.2" width="8.7" height="1" fill="#d6d6d6"/><rect x="120.0" y="96.1" width="5.7" height="1.1" fill="#a8a8a8"/><rect x="126.7" y="96.1" width="14.4" height="1" fill="#d6d6d6"/><rect x="120.0" y="99.0" width="18.0" height="1.3" fill="#8a8a8a"/><rect x="120.0" y="101.9" width="6.4" height="1.1" fill="#a8a8a8"/><rect x="127.4" y="101.9" width="7.7" height="1" fill="#d6d6d6"/><rect x="146.0" y="14.0" width="18.0" height="1.3" fill="#8a8a8a"/><rect x="146.0" y="16.9" width="5.9" height="1.1" fill="#a8a8a8"/><rect x="152.9" y="16.9" width="30.7" height="1" fill="#d6d6d6"/><rect x="146.0" y="19.8" width="8.6" height="1.1" fill="#a8a8a8"/><rect x="155.6" y="19.8" width="15.6" height="1" fill="#d6d6d6"/><rect x="146.0" y="22.7" width="7.5" height="1.1" fill="#a8a8a8"/><rect x="154.5" y="22.7" width="26.6" height="1" fill="#d6d6d6"/><rect x="146.0" y="25.6" width="5.4" height="1.1" fill="#a8a8a8"/><rect x="152.4" y="25.6" width="27.5" height="1" fill="#d6d6d6"/><rect x="146.0" y="28.5" width="18.0" height="1.3" fill="#8a8a8a"/><rect x="146.0" y="31.4" width="8.8" height="1.1" fill="#a8a8a8"/><rect x="155.8" y="31.4" width="19.1" height="1" fill="#d6d6d6"/><rect x="146.0" y="34.3" width="6.2" height="1.1" fill="#a8a8a8"/><rect x="153.2" y="34.3" width="21.8" height="1" fill="#d6d6d6"/><rect x="146.0" y="37.2" width="7.2" height="1.1" fill="#a8a8a8"/><rect x="154.2" y="37.2" width="31.3" height="1" fill="#d6d6d6"/><rect x="146.0" y="40.1" width="6.9" height="1.1" fill="#a8a8a8"/><rect x="153.9" y="40.1" width="32.6" height="1" fill="#d6d6d6"/><rect x="146.0" y="43.0" width="18.0" height="1.3" fill="#8a8a8a"/><rect x="146.0" y="45.9" width="6.8" height="1.1" fill="#a8a8a8"/><rect x="153.8" y="45.9" width="15.6" height="1" fill="#d6d6d6"/><rect x="146.0" y="48.8" width="7.6" height="1.1" fill="#a8a8a8"/><rect x="154.6" y="48.8" width="19.0" height="1" fill="#d6d6d6"/><rect x="146.0" y="51.7" width="8.3" height="1.1" fill="#a8a8a8"/><rect x="155.3" y="51.7" width="21.8" height="1" fill="#d6d6d6"/><rect x="146.0" y="54.6" width="6.8" height="1.1" fill="#a8a8a8"/><rect x="153.8" y="54.6" width="20.6" height="1" fill="#d6d6d6"/><rect x="146.0" y="57.5" width="18.0" height="1.3" fill="#8a8a8a"/><rect x="146.0" y="60.4" width="6.6" height="1.1" fill="#a8a8a8"/><rect x="153.6" y="60.4" width="25.8" height="1" fill="#d6d6d6"/><rect x="146.0" y="63.3" width="6.0" height="1.1" fill="#a8a8a8"/><rect x="153.0" y="63.3" width="16.8" height="1" fill="#d6d6d6"/><rect x="146.0" y="66.2" width="5.3" height="1.1" fill="#a8a8a8"/><rect x="152.3" y="66.2" width="25.1" height="1" fill="#d6d6d6"/><rect x="146.0" y="69.1" width="5.5" height="1.1" fill="#a8a8a8"/><rect x="152.5" y="69.1" width="34.1" height="1" fill="#d6d6d6"/><rect x="146.0" y="72.0" width="18.0" height="1.3" fill="#8a8a8a"/><rect x="146.0" y="74.9" width="6.5" height="1.1" fill="#a8a8a8"/><rect x="153.5" y="74.9" width="26.1" height="1" fill="#d6d6d6"/><rect x="146.0" y="77.8" width="6.2" height="1.1" fill="#a8a8a8"/><rect x="153.2" y="77.8" width="25.5" height="1" fill="#d6d6d6"/><rect x="146.0" y="80.7" width="7.3" height="1.1" fill="#a8a8a8"/><rect x="154.3" y="80.7" width="24.6" height="1" fill="#d6d6d6"/><rect x="146.0" y="83.6" width="6.3" height="1.1" fill="#a8a8a8"/><rect x="153.3" y="83.6" width="28.4" height="1" fill="#d6d6d6"/><rect x="146.0" y="86.5" width="18.0" height="1.3" fill="#8a8a8a"/><rect x="146.0" y="89.4" width="5.4" height="1.1" fill="#a8a8a8"/><rect x="152.4" y="89.4" width="19.6" height="1" fill="#d6d6d6"/><rect x="146.0" y="92.3" width="6.8" height="1.1" fill="#a8a8a8"/><rect x="153.8" y="92.3" width="20.9" height="1" fill="#d6d6d6"/><rect x="146.0" y="95.2" width="6.7" height="1.1" fill="#a8a8a8"/><rect x="153.7" y="95.2" width="25.3" height="1" fill="#d6d6d6"/><rect x="146.0" y="98.1" width="8.5" height="1.1" fill="#a8a8a8"/><rect x="155.5" y="98.1" width="18.6" height="1" fill="#d6d6d6"/><rect x="146.0" y="101.0" width="18.0" height="1.3" fill="#8a8a8a"/><rect x="146.0" y="103.9" width="8.2" height="1.1" fill="#a8a8a8"/><rect x="155.2" y="103.9" width="22.5" height="1" fill="#d6d6d6"/><path d="M118 14 L73.85 30 M153 9 L69.85 38 M118 46 L66.85 52 M158 68 L71.85 60 M120 82 L59.85 58" stroke="#f3a0a0" stroke-width="0.5" fill="none"/></svg>
<svg class="a" style="left:44px;top:443.3px" width="191" height="111" viewBox="0 0 191 111"><path d="M10 32 C9 22 13 14 18 13.5 C23 14 27 22 26.8 32 Z" fill="#2b2b2b"/><path d="M33 27 C33 18 40 13 46 13 C53 13 59 18 59.5 27 Z" fill="#d2d2d2"/><path d="M32.5 32.2 L32.5 28 C40 24 50 24 59.7 28 L59.7 32.2 Z" fill="#161616"/><rect x="7.8" y="35.2" width="24.7" height="20.5" fill="#a8a193"/><path d="M13 55.7 C13 48 15 44 18 43 C17 40 19 38 21 38 C24 38 25 41 24 43 C27 44 29 48 29 55.7 Z" fill="#141414"/><path d="M33.5 55 C33.5 44 40 36 47.6 36 C55 36 61.7 44 61.7 55 Z" fill="#7e7e7e"/><path d="M40 55 C40 47 43 42 47.6 42 C52 42 55 47 55 55 Z" fill="#151515"/><rect x="6" y="65.7" width="0.9" height="20" fill="#333"/><path d="M12 84 L20 66 L27 66 L19 86 Z" fill="#b9cde8"/><path d="M30 87 L30 70 C33 66 50 66 53 70 L55.7 80 L53 87 Z" fill="#1a1a1a"/><path d="M9 106 L10 89 C14 87 22 87 25 89 L26.2 106 Z" fill="#7a3a2a"/><rect x="13" y="93" width="9" height="13" fill="#8a1a40"/><path d="M30 106 L31 88 C36 87 48 87 52 88 L53.7 106 Z" fill="#b01818"/><rect x="64.1" y="20.8" width="20.7" height="27.2" fill="#202020"/><path d="M89 47 L90 30 C93 25 105 25 108 30 L109.4 47 Z" fill="#1c1c1c"/><path d="M113 45 L114 32 C116 26 129 26 131 32 L132.8 45 Z" fill="#7b8a74"/><rect x="64.1" y="51.3" width="20.2" height="26.5" fill="#c9bca8"/><rect x="79" y="51.3" width="5.3" height="26.5" fill="#8c8070"/><rect x="87" y="47.2" width="22.8" height="29.5" fill="#b8b0a6"/><path d="M90 76.7 L91 54 C95 50 102 50 106 54 L107 76.7 Z" fill="#8a7562"/><path d="M113 74 C113 62 116 57 119 56 L131 56 C134 57 136.9 62 136.9 74 Z" fill="#4a3f7a"/><rect x="120" y="55" width="10" height="22.8" fill="#777"/><path d="M62 106 L62 90 C66 87 76 87 79 90 L80 106 Z" fill="none" stroke="#aaa" stroke-width="0.5"/><path d="M83 106 L83 90 C87 86 100 86 103 90 L104.7 106 Z" fill="#8fd0dc"/><rect x="108" y="79.8" width="24.8" height="26.2" fill="#c8b89a"/><path d="M110 106 L111 86 C115 82 126 82 129 86 L131 106 Z" fill="#2a3350"/><rect x="138.9" y="22.1" width="25.5" height="34.9" fill="#bdbdbd"/><ellipse cx="151.5" cy="44" rx="6.5" ry="12" fill="#7f7f7f"/><rect x="164.8" y="22.8" width="21.4" height="34.9" fill="#b4b4b4"/><path d="M170 24 L182 24 L181 34 L178 40 L178 50 L174 50 L174 40 L171 34 Z" fill="#8f8f8f"/><path d="M145 106 L145 74 C150 72 180 72 184 76 L185.8 106 Z" fill="#262626"/><rect x="7.4" y="8.3" width="27.5" height="1.5" fill="#666"/><rect x="75.8" y="16.8" width="46.2" height="1.5" fill="#666"/><rect x="13.4" y="59.8" width="37.6" height="1.5" fill="#666"/><rect x="64" y="81.8" width="22.0" height="1.5" fill="#666"/><rect x="147" y="18.8" width="30.8" height="1.5" fill="#666"/><rect x="144.6" y="69.1" width="29.4" height="1.5" fill="#666"/><rect x="84.3" y="8.7" width="35.7" height="1.8" fill="#aaa"/></svg>
<svg class="a" style="left:44px;top:570.8px" width="191" height="111" viewBox="0 0 191 111"><defs><radialGradient id="t5g" cx="0.5" cy="0.45" r="0.7"><stop offset="0" stop-color="#dcdcdc"/><stop offset="1" stop-color="#cfcfcf"/></radialGradient></defs><rect x="31.9" y="16.1" width="127.5" height="83.9" fill="url(#t5g)"/><rect x="31.9" y="15.8" width="127.5" height="0.9" fill="#444"/><rect x="89.9" y="10.6" width="21.5" height="2.2" fill="#9a9a9a"/><path d="M71 40 C60 42 50 55 45 68 C42 75 40 80 40.5 85 L48 88 C52 84 55 80 58 76 C62 70 66 65 71 60 Z" fill="#222"/><path d="M121 40 C131 42 141 55 146 68 C149 75 151 80 150.5 85 L143 88 C139 84 136 80 133 76 C129 70 125 65 121 60 Z" fill="#222"/><path d="M70.4 40 L121.4 40 L121.4 68 Q121.4 70.4 118 70.4 L74 70.4 Q70.4 70.4 70.4 68 Z" fill="#262626"/><ellipse cx="95.6" cy="37" rx="20" ry="11" fill="#1e1e1e"/><ellipse cx="95.6" cy="50" rx="18" ry="8" fill="#333" opacity="0.6"/><rect x="118.0" y="20.0" width="18.0" height="1.3" fill="#8a8a8a"/><rect x="118.0" y="23.4" width="8.2" height="1.1" fill="#a8a8a8"/><rect x="127.2" y="23.4" width="23.5" height="1" fill="#b4b4b4"/><rect x="118.0" y="26.8" width="8.0" height="1.1" fill="#a8a8a8"/><rect x="127.0" y="26.8" width="27.1" height="1" fill="#b4b4b4"/><rect x="118.0" y="30.2" width="5.1" height="1.1" fill="#a8a8a8"/><rect x="124.1" y="30.2" width="29.6" height="1" fill="#b4b4b4"/><rect x="118.0" y="33.6" width="8.8" height="1.1" fill="#a8a8a8"/><rect x="127.8" y="33.6" width="18.3" height="1" fill="#b4b4b4"/><rect x="118.0" y="37.0" width="8.6" height="1.1" fill="#a8a8a8"/><rect x="127.6" y="37.0" width="21.6" height="1" fill="#b4b4b4"/><rect x="74.5" y="74.0" width="18.0" height="1.3" fill="#8a8a8a"/><rect x="74.5" y="77.0" width="6.9" height="1.1" fill="#a8a8a8"/><rect x="82.4" y="77.0" width="33.9" height="1" fill="#b4b4b4"/><rect x="74.5" y="80.0" width="5.0" height="1.1" fill="#a8a8a8"/><rect x="80.5" y="80.0" width="24.4" height="1" fill="#b4b4b4"/><rect x="74.5" y="83.0" width="6.9" height="1.1" fill="#a8a8a8"/><rect x="82.4" y="83.0" width="30.7" height="1" fill="#b4b4b4"/><rect x="74.5" y="86.0" width="6.5" height="1.1" fill="#a8a8a8"/><rect x="82.0" y="86.0" width="33.1" height="1" fill="#b4b4b4"/><rect x="74.5" y="89.0" width="6.1" height="1.1" fill="#a8a8a8"/><rect x="81.6" y="89.0" width="33.7" height="1" fill="#b4b4b4"/><rect x="74.5" y="92.0" width="7.9" height="1.1" fill="#a8a8a8"/><rect x="83.4" y="92.0" width="32.5" height="1" fill="#b4b4b4"/><rect x="74.5" y="95.0" width="7.2" height="1.1" fill="#a8a8a8"/><rect x="82.7" y="95.0" width="25.3" height="1" fill="#b4b4b4"/></svg>
<div class="a" style="left:48.05px;top:702.00px;width:183.3px;height:103.1px;overflow:hidden"><div class="a" style="left:0;top:0;width:1657px;height:835px;transform-origin:0 0;transform:scale(0.17130) translate(-509px,-183px)"><svg class="a" style="left:528px;top:250px" width="591" height="516" viewBox="528 250 591 516">
<defs>
 <radialGradient id="tvig" cx="823" cy="470" r="400" gradientUnits="userSpaceOnUse">
  <stop offset="0" stop-color="#000" stop-opacity="0"/><stop offset="0.68" stop-color="#000" stop-opacity="0"/><stop offset="1" stop-color="#000" stop-opacity="0.5"/>
 </radialGradient>
 <radialGradient id="tfloor" cx="828" cy="700" r="320" gradientUnits="userSpaceOnUse" gradientTransform="translate(828 700) scale(1 0.42) translate(-828 -700)">
  <stop offset="0" stop-color="#464646"/><stop offset="0.5" stop-color="#363636"/><stop offset="1" stop-color="#363636" stop-opacity="0"/>
 </radialGradient>
 <linearGradient id="tlapL" x1="0" y1="0" x2="1" y2="0.2">
  <stop offset="0" stop-color="#262626"/><stop offset="0.6" stop-color="#1d1d1d"/><stop offset="1" stop-color="#141414"/>
 </linearGradient>
 <linearGradient id="tlapR" x1="1" y1="0" x2="0" y2="0.2">
  <stop offset="0" stop-color="#303030"/><stop offset="0.6" stop-color="#242424"/><stop offset="1" stop-color="#141414"/>
 </linearGradient>
 <linearGradient id="tlin" x1="0" y1="0" x2="1" y2="0">
  <stop offset="0" stop-color="#1e1e1e"/><stop offset="0.3" stop-color="#161616"/><stop offset="0.55" stop-color="#0b0b0b"/><stop offset="0.8" stop-color="#121212"/><stop offset="1" stop-color="#1c1c1c"/>
 </linearGradient>
 <linearGradient id="tlinv" x1="0" y1="0" x2="0" y2="1">
  <stop offset="0" stop-color="#000" stop-opacity="0.35"/><stop offset="0.5" stop-color="#000" stop-opacity="0"/><stop offset="1" stop-color="#000" stop-opacity="0.2"/>
 </linearGradient>
 <filter id="tbl" x="-20%" y="-20%" width="140%" height="140%"><feGaussianBlur stdDeviation="4"/></filter>
 <filter id="tbl2" x="-20%" y="-20%" width="140%" height="140%"><feGaussianBlur stdDeviation="2"/></filter>
 <filter id="tbl1" x="-10%" y="-10%" width="120%" height="120%"><feGaussianBlur stdDeviation="0.8"/></filter>
 <filter id="tjtex" x="0" y="0" width="100%" height="100%">
  <feTurbulence type="fractalNoise" baseFrequency="0.5" numOctaves="2" seed="11" result="n"/>
  <feColorMatrix in="n" type="matrix" values="0 0 0 0 0.22  0 0 0 0 0.22  0 0 0 0 0.22  0 0 0 0.45 -0.24" result="m"/>
  <feComposite in="m" in2="SourceGraphic" operator="in" result="t"/>
  <feMerge><feMergeNode in="SourceGraphic"/><feMergeNode in="t"/></feMerge>
 </filter>
</defs>
<rect x="528" y="250" width="591" height="516" fill="#1e1e1e"/>
<rect x="528" y="250" width="591" height="516" fill="url(#tvig)"/>
<rect x="528" y="480" width="591" height="286" fill="url(#tfloor)"/>
<!-- silhouette -->
<path d="M687 366 C690 348 703 330 720 321 C742 308 765 298 782 291 C805 280 850 278 878 292 C908 304 938 320 951 338 L953 367 C965 372 985 382 992 392 L1030 452 L1105 612 L1109 632 L1097 627 L1100 674 L1090 687 L1038 702 L1018 655 C980 664 900 681 828 682 C750 681 680 668 621 654 L598 700 L539 673 L564 637 L543 626 L543 617 L609 452 L653 387 Z" fill="#0a0a0a"/>
<!-- hood top leather -->
<path d="M770 298 C790 284 840 278 870 286 C890 292 905 300 915 308 C890 302 860 298 830 298 C805 298 785 300 770 298 Z" fill="#2a2a2a" filter="url(#tbl1)"/>
<!-- hood inner band -->
<path d="M688 364 C700 338 728 316 781 304 C830 296 880 300 908 311 C930 320 947 335 951 346 L953 367 C935 357 915 350 897 345 L746 345 C725 350 705 356 692 362 Z" fill="#1a1a1a"/>
<path d="M700 356 C712 335 740 318 790 312 L794 342 C760 343 730 348 702 360 Z" fill="#3e3e3e" filter="url(#tbl2)" opacity="0.85"/>
<path d="M855 312 C895 314 925 328 945 352 L940 362 C920 352 890 346 855 343 Z" fill="#383838" filter="url(#tbl2)" opacity="0.85"/>
<rect x="795" y="321.5" width="58" height="23" fill="#2c2c2c"/>
<path d="M795 321 V345 M853 321 V345" stroke="#080808" stroke-width="1.3"/>
<path d="M688 364 C700 338 728 316 781 304 C830 296 880 300 908 311 C930 320 947 335 951 346 L953 367" fill="none" stroke="#464646" stroke-width="1.8"/>
<path d="M692 362 C705 356 725 350 746 345 L897 345 C915 350 935 357 953 367" fill="none" stroke="#0c0c0c" stroke-width="1.2"/>
<!-- lapels / shoulders -->
<path d="M653 387 L692 366 L742 347 L724 375 L697 390 L659 462 L612 560 L590 620 L543 617 L609 452 Z" fill="url(#tlapL)" filter="url(#tjtex)"/>
<path d="M690 370 C705 362 725 356 738 352 L722 376 C705 382 690 392 680 405 Z" fill="#4a4a4a" filter="url(#tbl2)" opacity="0.75"/>
<path d="M650 400 C630 430 615 470 600 520" stroke="#3a3a3a" stroke-width="10" fill="none" filter="url(#tbl)" opacity="0.7"/>
<path d="M952 367 L992 392 L1030 452 L1105 612 L1060 620 L983 452 L926 383 L905 352 Z" fill="url(#tlapR)" filter="url(#tjtex)"/>
<path d="M930 372 C955 380 975 395 990 415 L975 430 C960 410 945 395 925 385 Z" fill="#3a3a3a" filter="url(#tbl2)" opacity="0.8"/>
<path d="M1010 440 C1030 480 1050 530 1070 590" stroke="#343434" stroke-width="12" fill="none" filter="url(#tbl)" opacity="0.7"/>
<!-- lining -->
<path d="M697 390 L724 375 L742 347 L830 345 L905 352 L926 383 L983 452 L1060 620 L969 655 L828 672 L679 655 L590 620 L612 560 L659 462 Z" fill="url(#tlin)"/>
<path d="M697 390 L724 375 L742 347 L830 345 L905 352 L926 383 L983 452 L1060 620 L969 655 L828 672 L679 655 L590 620 L612 560 L659 462 Z" fill="url(#tlinv)"/>
<path d="M714 400 L772 395 L770 470 L716 470 Z" fill="#262626" filter="url(#tbl)" opacity="0.7"/>
<path d="M655 480 C680 450 700 430 712 420 C715 480 700 540 672 590 C660 615 665 640 690 655 L600 622 L612 560 Z" fill="#252525" filter="url(#tbl)" opacity="0.8"/>
<path d="M940 410 C965 440 985 480 1003 530 C1020 575 1040 605 1056 620 L1000 642 C985 600 965 545 950 480 Z" fill="#1d1d1d" filter="url(#tbl)" opacity="0.9"/>
<path d="M706 445 C708 520 700 600 705 655" stroke="#2a2a2a" stroke-width="1.2" fill="none"/>
<path d="M958 430 C945 500 948 590 960 655" stroke="#222" stroke-width="1.2" fill="none"/>
<path d="M790 430 C800 520 805 600 815 670" stroke="#181818" stroke-width="6" fill="none" filter="url(#tbl)"/>
<path d="M615 560 C630 520 660 480 690 470 C680 530 660 590 668 640 L610 622 Z" fill="#2e2e2e" filter="url(#tbl)" opacity="0.6"/>
<path d="M740 560 C735 600 745 640 760 668" stroke="#222" stroke-width="7" fill="none" filter="url(#tbl)"/>
<path d="M700 640 C760 660 820 668 880 664 C940 660 990 650 1040 630" stroke="#262626" stroke-width="6" fill="none" filter="url(#tbl2)"/>
<path d="M990 540 C1010 580 1030 610 1050 622" stroke="#2a2a2a" stroke-width="8" fill="none" filter="url(#tbl)"/>
<!-- label patch -->
<path d="M777 346 L867 346 L866 412 C864 422 856 423 822 423 C792 423 781 422 779 412 Z" fill="#262626" filter="url(#tjtex)"/>
<rect x="787" y="365" width="67" height="44.5" fill="#D9D6CE"/>
<rect x="789.5" y="367.5" width="62" height="39.5" fill="none" stroke="#9b978e" stroke-width="0.6" stroke-dasharray="1.5 1"/>
<text x="792.5" y="395" font-family="Liberation Serif" font-weight="bold" font-size="25" textLength="56" lengthAdjust="spacingAndGlyphs" fill="#1a1a1a">Hebiko</text>
<!-- hem band -->
<path d="M545 621 C600 641 700 669 828 677 C930 673 1030 651 1098 621" fill="none" stroke="#222" stroke-width="9"/>
<path d="M545 616 C600 636 700 664 828 672 C930 668 1030 646 1098 616" fill="none" stroke="#333" stroke-width="1.2"/>
<!-- cuffs -->
<path d="M539 673 L564 637 L621 654 L598 700 Z" fill="#1a1a1a"/>
<path d="M545 668 L566 642 L590 648 L575 684 Z" fill="#2a2a2a" filter="url(#tbl1)"/>
<circle cx="559" cy="650" r="2.2" fill="#9a9a9a"/>
<path d="M1018 655 L1038 702 L1090 687 L1100 674 L1097 626 Z" fill="#1a1a1a"/>
<path d="M1070 640 L1097 630 L1100 674 L1092 680 Z" fill="#7a7a7a" filter="url(#tbl1)"/>
<circle cx="1086" cy="656" r="2.2" fill="#ccc"/>
<!-- zippers -->
<path d="M651 390 L545 616" stroke="#8c8c8c" stroke-width="1.2" stroke-dasharray="1.6 1"/>
<path d="M994 394 L1103 612" stroke="#8c8c8c" stroke-width="1.2" stroke-dasharray="1.6 1"/>
<path d="M1098 608 L1106 606 L1110 632 L1102 634 Z" fill="#9a9a9a"/>
<!-- care tag -->
<path d="M897.5 573 L933.4 565.4 L938.3 590 L903.1 599.4 Z" fill="#E4E4E4"/>
</svg>
<svg class="a" style="left:1119px;top:459px" width="220" height="172" viewBox="1119 459 220 172">
<defs>
 <radialGradient id="tcpatch" cx="1250" cy="490" r="120" gradientUnits="userSpaceOnUse">
  <stop offset="0" stop-color="#3a3a3a"/><stop offset="0.6" stop-color="#2a2a2a"/><stop offset="1" stop-color="#1a1a1a"/>
 </radialGradient>
 <filter id="ttex" x="0" y="0" width="100%" height="100%">
  <feTurbulence type="fractalNoise" baseFrequency="0.3" numOctaves="3" seed="7" result="n"/>
  <feColorMatrix in="n" type="matrix" values="0 0 0 0 0.33  0 0 0 0 0.33  0 0 0 0 0.33  0 0 0 0.9 -0.42" result="m"/>
  <feComposite in="m" in2="SourceGraphic" operator="in" result="t"/>
  <feMerge><feMergeNode in="SourceGraphic"/><feMergeNode in="t"/></feMerge>
 </filter>
 <filter id="tcb" x="-20%" y="-20%" width="140%" height="140%"><feGaussianBlur stdDeviation="3"/></filter>
</defs>
<rect x="1119" y="459" width="220" height="172" fill="#111"/>
<path d="M1119 505 C1138 520 1150 580 1156 631 L1119 631 Z" fill="#242424" filter="url(#tcb)"/>
<path d="M1126 512 C1142 530 1150 585 1154 631" fill="none" stroke="#070707" stroke-width="2"/>
<path d="M1150 462 L1334 462 L1334 588 C1330 612 1305 623 1240 623 C1180 623 1158 612 1154 588 Z" fill="url(#tcpatch)" filter="url(#ttex)"/>
<rect x="1119" y="459" width="220" height="6" fill="#0a0a0a"/>
<path d="M1119 467 L1339 467" stroke="#333" stroke-width="1.5"/>
<rect x="1172" y="504" width="131" height="88" fill="#D6D3CC"/>
<rect x="1177" y="509" width="121" height="78" fill="none" stroke="#8f8b82" stroke-width="0.9" stroke-dasharray="2.5 1.8"/>
<text x="1183" y="564" font-family="Liberation Serif" font-weight="bold" font-size="48" textLength="109" lengthAdjust="spacingAndGlyphs" fill="#1a1a1a">Hebiko</text>
</svg>
<div class="t" style="left:987.3px;top:222.64px;font-size:27px;color:#595959;">Interior view</div>
<div class="t" style="left:1330.5px;top:230.12px;font-size:21.0px;color:#595959;"><b>Lining</b></div>
<div class="t" style="left:1330.5px;top:254.96px;font-size:18.0px;color:#595959;"><b>Material-</b> black cupro</div>
<div class="t" style="left:1330.5px;top:276.16px;font-size:18.0px;color:#595959;"><b>For-</b> main body and</div>
<div class="t" style="left:1330.5px;top:297.36px;font-size:18.0px;color:#595959;">arms</div>
<div class="t" style="left:1344.5px;top:340.32px;font-size:21.0px;color:#595959;"><b>Name Tag</b></div>
<div class="t" style="left:1344.5px;top:364.46px;font-size:18.0px;color:#595959;"><b>Woven-</b> cleanly</div>
<div class="t" style="left:1344.5px;top:385.76px;font-size:18.0px;color:#595959;">stitched,black thread</div>
<div class="t" style="left:1344.5px;top:407.26px;font-size:18.0px;color:#595959;"><b>Material</b>- Cotton twill (base)</div>
<div class="t" style="left:1344.5px;top:428.46px;font-size:18.0px;color:#595959;"><b>Logo</b>- embroidered</div>
<div class="t" style="left:1344.5px;top:449.96px;font-size:18.0px;color:#595959;">(Hebiko)</div>
<div class="t" style="left:1344.5px;top:471.86px;font-size:18.0px;color:#595959;"><b>Height-</b> 3 in</div>
<div class="t" style="left:1344.5px;top:492.96px;font-size:18.0px;color:#595959;"><b>Width-</b> 4.3 in</div>
<div class="t" style="left:1344.5px;top:514.56px;font-size:18.0px;color:#595959;"><b>Base color</b>- <b style="color:#000;font-size:16.3px">Dirty White:</b></div>
<div class="t" style="left:1344.5px;top:535.80px;font-size:16.3px;color:#000;"><b>#E8E4C9</b></div>
<div class="t" style="left:1403.5px;top:631.72px;font-size:21.0px;color:#595959;"><b>No care Tag</b></div>
<div class="t" style="left:1403.5px;top:657.39px;font-size:20.8px;color:#595959;">Or make 1 for</div>
<div class="t" style="left:1403.5px;top:681.99px;font-size:20.8px;color:#595959;">the VGS</div>
<div class="t" style="left:1403.5px;top:706.59px;font-size:20.8px;color:#595959;">branding</div>
<div class="t" style="left:1153.5px;top:671.31px;font-size:20.9px;color:#595959;"><b>Hood,Base,Pocket,Sle</b></div>
<div class="t" style="left:1153.5px;top:695.21px;font-size:20.9px;color:#595959;"><b>eve,Cuff, Drawstring</b></div>
<div class="t" style="left:1153.5px;top:719.21px;font-size:20.9px;color:#595959;"><b>and stitching color.</b></div>
<div class="t" style="left:1153.5px;top:744.80px;font-size:16.3px;color:#000;"><b>HEX Code: #000000 , black</b></div>
<svg class="a" style="left:0;top:0" width="1657" height="835" viewBox="0 0 1657 835"><path d="M1332.5 247.6 L876.66 473.52" stroke="#A50000" stroke-width="1.6" fill="none"/><path d="M866.8 478.4 L874.61 469.39 L878.70 477.64 Z" fill="#A50000"/><path d="M1344.2 348.2 L866.68 379.58" stroke="#FF0000" stroke-width="1.6" fill="none"/><path d="M855.7 380.3 L866.37 374.99 L866.98 384.17 Z" fill="#FF0000"/><path d="M1350 347.4 L1237.85 451.71" stroke="#FF0000" stroke-width="1.6" fill="none"/><path d="M1229.8 459.2 L1234.72 448.34 L1240.99 455.08 Z" fill="#FF0000"/><path d="M1392.7 635.2 L944.30 575.84" stroke="#FF0000" stroke-width="1.6" fill="none"/><path d="M933.4 574.4 L944.91 571.28 L943.70 580.40 Z" fill="#FF0000"/></svg></div></div>
</div></div>
<!-- ===== SLIDE ===== -->
<div class="a" style="left:508px;top:182px;width:1071px;height:602px;background:#fff;border-top:1px solid #C8C8C8;border-left:1px solid #C8C8C8"></div>
<svg class="a" style="left:528px;top:250px" width="591" height="516" viewBox="528 250 591 516">
<defs>
 <radialGradient id="mvig" cx="823" cy="470" r="400" gradientUnits="userSpaceOnUse">
  <stop offset="0" stop-color="#000" stop-opacity="0"/><stop offset="0.68" stop-color="#000" stop-opacity="0"/><stop offset="1" stop-color="#000" stop-opacity="0.5"/>
 </radialGradient>
 <radialGradient id="mfloor" cx="828" cy="700" r="320" gradientUnits="userSpaceOnUse" gradientTransform="translate(828 700) scale(1 0.42) translate(-828 -700)">
  <stop offset="0" stop-color="#464646"/><stop offset="0.5" stop-color="#363636"/><stop offset="1" stop-color="#363636" stop-opacity="0"/>
 </radialGradient>
 <linearGradient id="mlapL" x1="0" y1="0" x2="1" y2="0.2">
  <stop offset="0" stop-color="#262626"/><stop offset="0.6" stop-color="#1d1d1d"/><stop offset="1" stop-color="#141414"/>
 </linearGradient>
 <linearGradient id="mlapR" x1="1" y1="0" x2="0" y2="0.2">
  <stop offset="0" stop-color="#303030"/><stop offset="0.6" stop-color="#242424"/><stop offset="1" stop-color="#141414"/>
 </linearGradient>
 <linearGradient id="mlin" x1="0" y1="0" x2="1" y2="0">
  <stop offset="0" stop-color="#1e1e1e"/><stop offset="0.3" stop-color="#161616"/><stop offset="0.55" stop-color="#0b0b0b"/><stop offset="0.8" stop-color="#121212"/><stop offset="1" stop-color="#1c1c1c"/>
 </linearGradient>
 <linearGradient id="mlinv" x1="0" y1="0" x2="0" y2="1">
  <stop offset="0" stop-color="#000" stop-opacity="0.35"/><stop offset="0.5" stop-color="#000" stop-opacity="0"/><stop offset="1" stop-color="#000" stop-opacity="0.2"/>
 </linearGradient>
 <filter id="mbl" x="-20%" y="-20%" width="140%" height="140%"><feGaussianBlur stdDeviation="4"/></filter>
 <filter id="mbl2" x="-20%" y="-20%" width="140%" height="140%"><feGaussianBlur stdDeviation="2"/></filter>
 <filter id="mbl1" x="-10%" y="-10%" width="120%" height="120%"><feGaussianBlur stdDeviation="0.8"/></filter>
 <filter id="mjtex" x="0" y="0" width="100%" height="100%">
  <feTurbulence type="fractalNoise" baseFrequency="0.5" numOctaves="2" seed="11" result="n"/>
  <feColorMatrix in="n" type="matrix" values="0 0 0 0 0.22  0 0 0 0 0.22  0 0 0 0 0.22  0 0 0 0.45 -0.24" result="m"/>
  <feComposite in="m" in2="SourceGraphic" operator="in" result="t"/>
  <feMerge><feMergeNode in="SourceGraphic"/><feMergeNode in="t"/></feMerge>
 </filter>
</defs>
<rect x="528" y="250" width="591" height="516" fill="#1e1e1e"/>
<rect x="528" y="250" width="591" height="516" fill="url(#mvig)"/>
<rect x="528" y="480" width="591" height="286" fill="url(#mfloor)"/>
<!-- silhouette -->
<path d="M687 366 C690 348 703 330 720 321 C742 308 765 298 782 291 C805 280 850 278 878 292 C908 304 938 320 951 338 L953 367 C965 372 985 382 992 392 L1030 452 L1105 612 L1109 632 L1097 627 L1100 674 L1090 687 L1038 702 L1018 655 C980 664 900 681 828 682 C750 681 680 668 621 654 L598 700 L539 673 L564 637 L543 626 L543 617 L609 452 L653 387 Z" fill="#0a0a0a"/>
<!-- hood top leather -->
<path d="M770 298 C790 284 840 278 870 286 C890 292 905 300 915 308 C890 302 860 298 830 298 C805 298 785 300 770 298 Z" fill="#2a2a2a" filter="url(#mbl1)"/>
<!-- hood inner band -->
<path d="M688 364 C700 338 728 316 781 304 C830 296 880 300 908 311 C930 320 947 335 951 346 L953 367 C935 357 915 350 897 345 L746 345 C725 350 705 356 692 362 Z" fill="#1a1a1a"/>
<path d="M700 356 C712 335 740 318 790 312 L794 342 C760 343 730 348 702 360 Z" fill="#3e3e3e" filter="url(#mbl2)" opacity="0.85"/>
<path d="M855 312 C895 314 925 328 945 352 L940 362 C920 352 890 346 855 343 Z" fill="#383838" filter="url(#mbl2)" opacity="0.85"/>
<rect x="795" y="321.5" width="58" height="23" fill="#2c2c2c"/>
<path d="M795 321 V345 M853 321 V345" stroke="#080808" stroke-width="1.3"/>
<path d="M688 364 C700 338 728 316 781 304 C830 296 880 300 908 311 C930 320 947 335 951 346 L953 367" fill="none" stroke="#464646" stroke-width="1.8"/>
<path d="M692 362 C705 356 725 350 746 345 L897 345 C915 350 935 357 953 367" fill="none" stroke="#0c0c0c" stroke-width="1.2"/>
<!-- lapels / shoulders -->
<path d="M653 387 L692 366 L742 347 L724 375 L697 390 L659 462 L612 560 L590 620 L543 617 L609 452 Z" fill="url(#mlapL)" filter="url(#mjtex)"/>
<path d="M690 370 C705 362 725 356 738 352 L722 376 C705 382 690 392 680 405 Z" fill="#4a4a4a" filter="url(#mbl2)" opacity="0.75"/>
<path d="M650 400 C630 430 615 470 600 520" stroke="#3a3a3a" stroke-width="10" fill="none" filter="url(#mbl)" opacity="0.7"/>
<path d="M952 367 L992 392 L1030 452 L1105 612 L1060 620 L983 452 L926 383 L905 352 Z" fill="url(#mlapR)" filter="url(#mjtex)"/>
<path d="M930 372 C955 380 975 395 990 415 L975 430 C960 410 945 395 925 385 Z" fill="#3a3a3a" filter="url(#mbl2)" opacity="0.8"/>
<path d="M1010 440 C1030 480 1050 530 1070 590" stroke="#343434" stroke-width="12" fill="none" filter="url(#mbl)" opacity="0.7"/>
<!-- lining -->
<path d="M697 390 L724 375 L742 347 L830 345 L905 352 L926 383 L983 452 L1060 620 L969 655 L828 672 L679 655 L590 620 L612 560 L659 462 Z" fill="url(#mlin)"/>
<path d="M697 390 L724 375 L742 347 L830 345 L905 352 L926 383 L983 452 L1060 620 L969 655 L828 672 L679 655 L590 620 L612 560 L659 462 Z" fill="url(#mlinv)"/>
<path d="M714 400 L772 395 L770 470 L716 470 Z" fill="#262626" filter="url(#mbl)" opacity="0.7"/>
<path d="M655 480 C680 450 700 430 712 420 C715 480 700 540 672 590 C660 615 665 640 690 655 L600 622 L612 560 Z" fill="#252525" filter="url(#mbl)" opacity="0.8"/>
<path d="M940 410 C965 440 985 480 1003 530 C1020 575 1040 605 1056 620 L1000 642 C985 600 965 545 950 480 Z" fill="#1d1d1d" filter="url(#mbl)" opacity="0.9"/>
<path d="M706 445 C708 520 700 600 705 655" stroke="#2a2a2a" stroke-width="1.2" fill="none"/>
<path d="M958 430 C945 500 948 590 960 655" stroke="#222" stroke-width="1.2" fill="none"/>
<path d="M790 430 C800 520 805 600 815 670" stroke="#181818" stroke-width="6" fill="none" filter="url(#mbl)"/>
<path d="M615 560 C630 520 660 480 690 470 C680 530 660 590 668 640 L610 622 Z" fill="#2e2e2e" filter="url(#mbl)" opacity="0.6"/>
<path d="M740 560 C735 600 745 640 760 668" stroke="#222" stroke-width="7" fill="none" filter="url(#mbl)"/>
<path d="M700 640 C760 660 820 668 880 664 C940 660 990 650 1040 630" stroke="#262626" stroke-width="6" fill="none" filter="url(#mbl2)"/>
<path d="M990 540 C1010 580 1030 610 1050 622" stroke="#2a2a2a" stroke-width="8" fill="none" filter="url(#mbl)"/>
<!-- label patch -->
<path d="M777 346 L867 346 L866 412 C864 422 856 423 822 423 C792 423 781 422 779 412 Z" fill="#262626" filter="url(#mjtex)"/>
<rect x="787" y="365" width="67" height="44.5" fill="#D9D6CE"/>
<rect x="789.5" y="367.5" width="62" height="39.5" fill="none" stroke="#9b978e" stroke-width="0.6" stroke-dasharray="1.5 1"/>
<text x="792.5" y="395" font-family="Liberation Serif" font-weight="bold" font-size="25" textLength="56" lengthAdjust="spacingAndGlyphs" fill="#1a1a1a">Hebiko</text>
<!-- hem band -->
<path d="M545 621 C600 641 700 669 828 677 C930 673 1030 651 1098 621" fill="none" stroke="#222" stroke-width="9"/>
<path d="M545 616 C600 636 700 664 828 672 C930 668 1030 646 1098 616" fill="none" stroke="#333" stroke-width="1.2"/>
<!-- cuffs -->
<path d="M539 673 L564 637 L621 654 L598 700 Z" fill="#1a1a1a"/>
<path d="M545 668 L566 642 L590 648 L575 684 Z" fill="#2a2a2a" filter="url(#mbl1)"/>
<circle cx="559" cy="650" r="2.2" fill="#9a9a9a"/>
<path d="M1018 655 L1038 702 L1090 687 L1100 674 L1097 626 Z" fill="#1a1a1a"/>
<path d="M1070 640 L1097 630 L1100 674 L1092 680 Z" fill="#7a7a7a" filter="url(#mbl1)"/>
<circle cx="1086" cy="656" r="2.2" fill="#ccc"/>
<!-- zippers -->
<path d="M651 390 L545 616" stroke="#8c8c8c" stroke-width="1.2" stroke-dasharray="1.6 1"/>
<path d="M994 394 L1103 612" stroke="#8c8c8c" stroke-width="1.2" stroke-dasharray="1.6 1"/>
<path d="M1098 608 L1106 606 L1110 632 L1102 634 Z" fill="#9a9a9a"/>
<!-- care tag -->
<path d="M897.5 573 L933.4 565.4 L938.3 590 L903.1 599.4 Z" fill="#E4E4E4"/>
</svg>
<svg class="a" style="left:1119px;top:459px" width="220" height="172" viewBox="1119 459 220 172">
<defs>
 <radialGradient id="mcpatch" cx="1250" cy="490" r="120" gradientUnits="userSpaceOnUse">
  <stop offset="0" stop-color="#3a3a3a"/><stop offset="0.6" stop-color="#2a2a2a"/><stop offset="1" stop-color="#1a1a1a"/>
 </radialGradient>
 <filter id="mtex" x="0" y="0" width="100%" height="100%">
  <feTurbulence type="fractalNoise" baseFrequency="0.3" numOctaves="3" seed="7" result="n"/>
  <feColorMatrix in="n" type="matrix" values="0 0 0 0 0.33  0 0 0 0 0.33  0 0 0 0 0.33  0 0 0 0.9 -0.42" result="m"/>
  <feComposite in="m" in2="SourceGraphic" operator="in" result="t"/>
  <feMerge><feMergeNode in="SourceGraphic"/><feMergeNode in="t"/></feMerge>
 </filter>
 <filter id="mcb" x="-20%" y="-20%" width="140%" height="140%"><feGaussianBlur stdDeviation="3"/></filter>
</defs>
<rect x="1119" y="459" width="220" height="172" fill="#111"/>
<path d="M1119 505 C1138 520 1150 580 1156 631 L1119 631 Z" fill="#242424" filter="url(#mcb)"/>
<path d="M1126 512 C1142 530 1150 585 1154 631" fill="none" stroke="#070707" stroke-width="2"/>
<path d="M1150 462 L1334 462 L1334 588 C1330 612 1305 623 1240 623 C1180 623 1158 612 1154 588 Z" fill="url(#mcpatch)" filter="url(#mtex)"/>
<rect x="1119" y="459" width="220" height="6" fill="#0a0a0a"/>
<path d="M1119 467 L1339 467" stroke="#333" stroke-width="1.5"/>
<rect x="1172" y="504" width="131" height="88" fill="#D6D3CC"/>
<rect x="1177" y="509" width="121" height="78" fill="none" stroke="#8f8b82" stroke-width="0.9" stroke-dasharray="2.5 1.8"/>
<text x="1183" y="564" font-family="Liberation Serif" font-weight="bold" font-size="48" textLength="109" lengthAdjust="spacingAndGlyphs" fill="#1a1a1a">Hebiko</text>
</svg>
<div class="t" style="left:987.3px;top:222.64px;font-size:27px;color:#595959;">Interior view</div>
<div class="t" style="left:1330.5px;top:230.12px;font-size:21.0px;color:#595959;"><b>Lining</b></div>
<div class="t" style="left:1330.5px;top:254.96px;font-size:18.0px;color:#595959;"><b>Material-</b> black cupro</div>
<div class="t" style="left:1330.5px;top:276.16px;font-size:18.0px;color:#595959;"><b>For-</b> main body and</div>
<div class="t" style="left:1330.5px;top:297.36px;font-size:18.0px;color:#595959;">arms</div>
<div class="t" style="left:1344.5px;top:340.32px;font-size:21.0px;color:#595959;"><b>Name Tag</b></div>
<div class="t" style="left:1344.5px;top:364.46px;font-size:18.0px;color:#595959;"><b>Woven-</b> cleanly</div>
<div class="t" style="left:1344.5px;top:385.76px;font-size:18.0px;color:#595959;">stitched,black thread</div>
<div class="t" style="left:1344.5px;top:407.26px;font-size:18.0px;color:#595959;"><b>Material</b>- Cotton twill (base)</div>
<div class="t" style="left:1344.5px;top:428.46px;font-size:18.0px;color:#595959;"><b>Logo</b>- embroidered</div>
<div class="t" style="left:1344.5px;top:449.96px;font-size:18.0px;color:#595959;">(Hebiko)</div>
<div class="t" style="left:1344.5px;top:471.86px;font-size:18.0px;color:#595959;"><b>Height-</b> 3 in</div>
<div class="t" style="left:1344.5px;top:492.96px;font-size:18.0px;color:#595959;"><b>Width-</b> 4.3 in</div>
<div class="t" style="left:1344.5px;top:514.56px;font-size:18.0px;color:#595959;"><b>Base color</b>- <b style="color:#000;font-size:16.3px">Dirty White:</b></div>
<div class="t" style="left:1344.5px;top:535.80px;font-size:16.3px;color:#000;"><b>#E8E4C9</b></div>
<div class="t" style="left:1403.5px;top:631.72px;font-size:21.0px;color:#595959;"><b>No care Tag</b></div>
<div class="t" style="left:1403.5px;top:657.39px;font-size:20.8px;color:#595959;">Or make 1 for</div>
<div class="t" style="left:1403.5px;top:681.99px;font-size:20.8px;color:#595959;">the VGS</div>
<div class="t" style="left:1403.5px;top:706.59px;font-size:20.8px;color:#595959;">branding</div>
<div class="t" style="left:1153.5px;top:671.31px;font-size:20.9px;color:#595959;"><b>Hood,Base,Pocket,Sle</b></div>
<div class="t" style="left:1153.5px;top:695.21px;font-size:20.9px;color:#595959;"><b>eve,Cuff, Drawstring</b></div>
<div class="t" style="left:1153.5px;top:719.21px;font-size:20.9px;color:#595959;"><b>and stitching color.</b></div>
<div class="t" style="left:1153.5px;top:744.80px;font-size:16.3px;color:#000;"><b>HEX Code: #000000 , black</b></div>
<svg class="a" style="left:0;top:0" width="1657" height="835" viewBox="0 0 1657 835"><path d="M1332.5 247.6 L876.66 473.52" stroke="#A50000" stroke-width="1.6" fill="none"/><path d="M866.8 478.4 L874.61 469.39 L878.70 477.64 Z" fill="#A50000"/><path d="M1344.2 348.2 L866.68 379.58" stroke="#FF0000" stroke-width="1.6" fill="none"/><path d="M855.7 380.3 L866.37 374.99 L866.98 384.17 Z" fill="#FF0000"/><path d="M1350 347.4 L1237.85 451.71" stroke="#FF0000" stroke-width="1.6" fill="none"/><path d="M1229.8 459.2 L1234.72 448.34 L1240.99 455.08 Z" fill="#FF0000"/><path d="M1392.7 635.2 L944.30 575.84" stroke="#FF0000" stroke-width="1.6" fill="none"/><path d="M933.4 574.4 L944.91 571.28 L943.70 580.40 Z" fill="#FF0000"/></svg>
</div>
</body></html>
